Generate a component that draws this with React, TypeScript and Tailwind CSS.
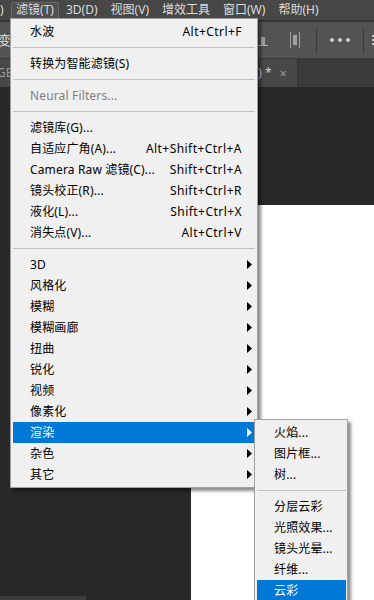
import React from "react"

type Item =
  | { sep: true }
  | { sep?: false; label: string; shortcut?: string; sub?: boolean; disabled?: boolean; active?: boolean }

const mainItems: Item[] = [
  { label: "水波", shortcut: "Alt+Ctrl+F" },
  { sep: true },
  { label: "转换为智能滤镜(S)" },
  { sep: true },
  { label: "Neural Filters...", disabled: true },
  { sep: true },
  { label: "滤镜库(G)..." },
  { label: "自适应广角(A)...", shortcut: "Alt+Shift+Ctrl+A" },
  { label: "Camera Raw 滤镜(C)...", shortcut: "Shift+Ctrl+A" },
  { label: "镜头校正(R)...", shortcut: "Shift+Ctrl+R" },
  { label: "液化(L)...", shortcut: "Shift+Ctrl+X" },
  { label: "消失点(V)...", shortcut: "Alt+Ctrl+V" },
  { sep: true },
  { label: "3D", sub: true },
  { label: "风格化", sub: true },
  { label: "模糊", sub: true },
  { label: "模糊画廊", sub: true },
  { label: "扭曲", sub: true },
  { label: "锐化", sub: true },
  { label: "视频", sub: true },
  { label: "像素化", sub: true },
  { label: "渲染", sub: true, active: true },
  { label: "杂色", sub: true },
  { label: "其它", sub: true },
]

const renderItems: Item[] = [
  { label: "火焰..." },
  { label: "图片框..." },
  { label: "树..." },
  { sep: true },
  { label: "分层云彩" },
  { label: "光照效果..." },
  { label: "镜头光晕..." },
  { label: "纤维..." },
  { label: "云彩", active: true },
]

function MenuRows({ items }: { items: Item[] }) {
  return (
    <>
      {items.map((it, i) =>
        it.sep ? (
          <div key={i} className="flex h-[11px] items-center">
            <div className="h-px w-full bg-[#c2c2c2]" />
          </div>
        ) : (
          <div
            key={i}
            className={`relative flex h-[21px] items-center justify-between whitespace-nowrap pl-[17px] pr-[13px] ${
              it.active ? "bg-[#0078d7] text-white" : it.disabled ? "text-[#808080]" : "text-black"
            }`}
          >
            <span className="tracking-[0.15px]">{it.label}</span>
            {it.shortcut && <span className="tracking-[0.45px]">{it.shortcut}</span>}
            {it.sub && (
              <svg className="absolute right-[2px] top-[6px]" width="6" height="9" viewBox="0 0 6 9">
                <path d="M0 0 L5 4.5 L0 9 Z" fill={it.active ? "#ffffff" : "#000000"} />
              </svg>
            )}
          </div>
        )
      )}
    </>
  )
}

export default function App() {
  const menus = ["3D(D)", "视图(V)", "增效工具", "窗口(W)", "帮助(H)"]

  return (
    <div className="relative flex h-[600px] w-[374px] flex-col overflow-hidden bg-[#282828] font-['Noto_Sans','Noto_Sans_CJK_SC',sans-serif] text-[12px] leading-none">
      {/* menu bar */}
      <div className="flex h-[20px] items-center bg-[#474747] text-[#dcdcdc]">
        <span className="w-[11px]">)</span>
        <span className="flex h-[17px] w-[48px] items-center justify-center rounded-[2px] border border-[#6a6a6a] bg-[#505050]">
          滤镜(T)
        </span>
        <div className="ml-[7px] flex gap-[13px]">
          {menus.map((m) => (
            <span key={m}>{m}</span>
          ))}
        </div>
      </div>
      <div className="h-[2px] bg-[#363636]" />

      {/* options bar */}
      <div className="flex h-[36px] items-center bg-[#535353] text-[#e0e0e0]">
        <span className="-ml-[2px] text-[13px]">变</span>
        <div className="ml-auto flex h-full items-center">
          <div className="relative mr-[22px] h-[16px] w-[15px]">
            <div className="absolute left-[1px] top-[1px] h-[12px] w-[4px] bg-[#9c9c9c]" />
            <div className="absolute left-[8px] top-[5px] h-[8px] w-[4px] bg-[#9c9c9c]" />
            <div className="absolute bottom-[2px] left-0 h-px w-[15px] bg-[#b0b0b0]" />
          </div>
          <div className="mr-[16px] flex h-[16px] items-center gap-[2px]">
            <div className="h-[16px] w-px bg-[#a0a0a0]" />
            <div className="h-[10px] w-[4px] bg-[#a0a0a0]" />
            <div className="h-[16px] w-px bg-[#a0a0a0]" />
          </div>
          <div className="h-[25px] w-px bg-[#3c3c3c]" />
          <div className="mx-[13px] flex gap-[4px]">
            <div className="h-[4px] w-[4px] rounded-full bg-[#d0d0d0]" />
            <div className="h-[4px] w-[4px] rounded-full bg-[#d0d0d0]" />
            <div className="h-[4px] w-[4px] rounded-full bg-[#d0d0d0]" />
          </div>
          <div className="h-[25px] w-px bg-[#3c3c3c]" />
          <div className="ml-[8px] flex flex-col gap-[2px]">
            <div className="h-[2px] w-[2px] bg-[#c8c8c8]" />
            <div className="h-[2px] w-[2px] bg-[#c8c8c8]" />
            <div className="h-[2px] w-[2px] bg-[#c8c8c8]" />
          </div>
        </div>
      </div>

      {/* document tabs */}
      <div className="flex h-[29px] border-t border-[#3a3a3a] bg-[#3b3b3b]">
        <div className="flex w-[298px] items-center justify-between border-r border-[#333333] bg-[#474747] pr-[10px] text-[#9a9a9a]">
          <span className="-ml-[3px]">GB</span>
          <span className="flex items-center gap-[8px] text-[#d0d0d0]">
            <span>) *</span>
            <span className="text-[13px] text-[#9a9a9a]">×</span>
          </span>
        </div>
      </div>

      {/* workspace */}
      <div className="flex flex-1">
        <div className="flex w-[191px] flex-col justify-end">
          <div className="h-[4px] w-[86px] bg-[#3c3c3c]" />
        </div>
        <div className="flex flex-1 flex-col pt-[118px]">
          <div className="flex-1 bg-white" />
        </div>
      </div>

      {/* filter menu */}
      <div className="absolute left-[10px] top-[18px] z-10 w-[248px] border border-[#a0a0a0] bg-[#f0f0f0] px-[2px] py-[2px] shadow-[3px_3px_3px_rgba(0,0,0,0.45)]">
        <MenuRows items={mainItems} />
      </div>

      {/* render submenu */}
      <div className="absolute left-[254px] top-[419px] z-20 w-[94px] border border-[#a0a0a0] bg-[#f0f0f0] py-[2px] pl-[2px] pr-px shadow-[3px_3px_3px_rgba(0,0,0,0.45)]">
        <MenuRows items={renderItems} />
      </div>
    </div>
  )
}
